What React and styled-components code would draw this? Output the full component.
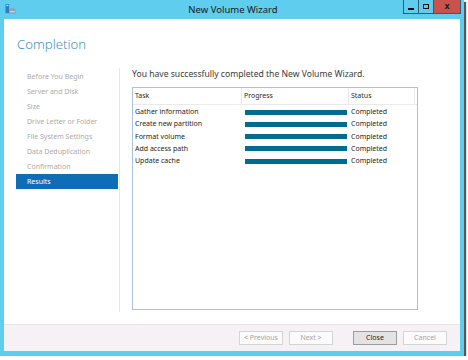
import styled, { createGlobalStyle } from 'styled-components'

const Global = createGlobalStyle`
  html, body {
    margin: 0;
    padding: 0;
    background: #ffffff;
  }
  body {
    font-family: 'Noto Sans', 'Open Sans', sans-serif;
  }
`

const steps = [
  'Before You Begin',
  'Server and Disk',
  'Size',
  'Drive Letter or Folder',
  'File System Settings',
  'Data Deduplication',
  'Confirmation',
  'Results'
]

const tasks = [
  'Gather information',
  'Create new partition',
  'Format volume',
  'Add access path',
  'Update cache'
]

export default function App() {
  return (
    <>
      <Global />
      <Janela>
        <BarraTitulo>
          <IconeApp viewBox="0 0 12 12">
            <rect x="0.5" y="0" width="4" height="10" fill="#2f7fc4" />
            <rect x="1.3" y="1" width="2.4" height="1.2" fill="#bfe3f7" />
            <path d="M4.5 6.5 L6 4.5 H10 L11.5 6.5 V10.5 H4.5 Z" fill="#8ea3b4" />
            <rect x="5.5" y="8" width="5" height="1" fill="#e8eef2" />
          </IconeApp>
          <Titulo>New Volume Wizard</Titulo>
          <BotoesJanela>
            <BotaoJanela>
              <Traco />
            </BotaoJanela>
            <BotaoJanela>
              <Quadrado />
            </BotaoJanela>
            <BotaoJanela $fechar>x</BotaoJanela>
          </BotoesJanela>
        </BarraTitulo>
        <Cliente>
          <Conteudo>
            <Cabecalho>Completion</Cabecalho>
            <Corpo>
              <Navegacao>
                {steps.map(step => (
                  <Passo key={step} $ativo={step === 'Results'}>
                    {step}
                  </Passo>
                ))}
              </Navegacao>
              <Principal>
                <Mensagem>
                  You have successfully completed the New Volume Wizard.
                </Mensagem>
                <Tabela>
                  <LinhaCabecalho>
                    <CelulaCabecalho $largura="109px">Task</CelulaCabecalho>
                    <CelulaCabecalho $largura="107px">Progress</CelulaCabecalho>
                    <CelulaCabecalho $largura="66px">Status</CelulaCabecalho>
                    <Preenchimento />
                  </LinhaCabecalho>
                  <Linhas>
                    {tasks.map(task => (
                      <Linha key={task}>
                        <Celula $largura="109px">{task}</Celula>
                        <CelulaProgresso>
                          <Barra />
                        </CelulaProgresso>
                        <Celula $largura="66px">Completed</Celula>
                      </Linha>
                    ))}
                  </Linhas>
                </Tabela>
              </Principal>
            </Corpo>
          </Conteudo>
          <Rodape>
            <Botao disabled>&lt; Previous</Botao>
            <Botao disabled>Next &gt;</Botao>
            <Botao $principal $espaco>
              Close
            </Botao>
            <Botao disabled>Cancel</Botao>
          </Rodape>
        </Cliente>
      </Janela>
    </>
  )
}

const Janela = styled.div`
  width: 464px;
  height: 356px;
  box-sizing: border-box;
  background: #5fcdee;
  padding: 0 4px 5px 4px;
  display: flex;
  flex-direction: column;
  box-shadow: 2px 2px 1px rgba(30, 30, 30, 0.75);
`

const BarraTitulo = styled.div`
  height: 19px;
  margin: 0 -4px;
  padding: 0 3px 0 5px;
  display: grid;
  grid-template-columns: 1fr auto 1fr;
  align-items: start;
`

const IconeApp = styled.svg`
  width: 11px;
  height: 11px;
  margin-top: 4px;
`

const Titulo = styled.div`
  font-size: 9.5px;
  line-height: 19px;
  color: #1a1a1a;
`

const BotoesJanela = styled.div`
  justify-self: end;
  display: flex;
`

const BotaoJanela = styled.div`
  width: ${props => (props.$fechar ? '28px' : '16px')};
  height: 14px;
  box-sizing: border-box;
  border: 1px solid #2f5d74;
  border-top: none;
  margin-left: -1px;
  background: ${props => (props.$fechar ? '#c9524d' : 'transparent')};
  display: flex;
  align-items: center;
  justify-content: center;
  font-family: 'DejaVu Sans', sans-serif;
  font-weight: 700;
  font-size: 8px;
  color: #1f1f1f;
  line-height: 1;
`

const Traco = styled.span`
  width: 6px;
  height: 2px;
  margin-top: 4px;
  background: #111;
`

const Quadrado = styled.span`
  width: 4px;
  height: 3px;
  border: 1.5px solid #111;
`

const Cliente = styled.div`
  flex: 1;
  background: #ffffff;
  display: flex;
  flex-direction: column;
`

const Conteudo = styled.div`
  flex: 1;
  display: flex;
  flex-direction: column;
`

const Cabecalho = styled.h1`
  margin: 0;
  padding: 16px 0 0 13px;
  height: 35px;
  box-sizing: border-box;
  font-weight: 300;
  font-size: 13.2px;
  line-height: 18px;
  color: #4a90c2;
`

const Corpo = styled.div`
  display: flex;
  padding-left: 12px;
  margin-top: 14px;
`

const Navegacao = styled.div`
  width: 104px;
  height: 244px;
  border-right: 1px solid #e6e6e6;
  padding-top: 1px;
  box-sizing: border-box;
`

const Passo = styled.div`
  width: 102px;
  height: 15px;
  box-sizing: border-box;
  padding-left: 11px;
  font-size: 7px;
  line-height: 15px;
  white-space: nowrap;
  color: ${props => (props.$ativo ? '#ffffff' : '#ababab')};
  background: ${props => (props.$ativo ? '#0f6db6' : 'transparent')};
`

const Principal = styled.div`
  padding-left: 12px;
  display: flex;
  flex-direction: column;
`

const Mensagem = styled.div`
  font-size: 8.6px;
  line-height: 12px;
  color: #3a3a3a;
  white-space: nowrap;
`

const Tabela = styled.div`
  margin-top: 7px;
  width: 286px;
  height: 223px;
  box-sizing: border-box;
  border: 1px solid #a9c1da;
`

const LinhaCabecalho = styled.div`
  display: flex;
  height: 16px;
  border-bottom: 1px solid #eaeaea;
`

const CelulaCabecalho = styled.div`
  width: ${props => props.$largura};
  box-sizing: border-box;
  border-right: 1px solid #e8e8e8;
  padding-left: 2px;
  font-size: 7px;
  line-height: 16px;
  color: #2a2a2a;
`

const Preenchimento = styled.div`
  flex: 1;
`

const Linhas = styled.div`
  padding-top: 1px;
`

const Linha = styled.div`
  display: flex;
  height: 12.25px;
  align-items: center;
`

const Celula = styled.div`
  width: ${props => props.$largura};
  box-sizing: border-box;
  padding-left: 2px;
  font-size: 7px;
  line-height: 12px;
  color: #1e1e1e;
  white-space: nowrap;
`

const CelulaProgresso = styled.div`
  width: 107px;
  box-sizing: border-box;
  padding: 0 2px 0 3px;
  display: flex;
  align-items: center;
`

const Barra = styled.div`
  flex: 1;
  height: 5px;
  background: #006c8f;
`

const Rodape = styled.div`
  height: 27px;
  box-sizing: border-box;
  border-top: 1px solid #e6e4e5;
  background: #f6f1f4;
  display: flex;
  align-items: center;
  justify-content: flex-end;
  gap: 6px;
  padding: 0 13px 0 0;
`

const Botao = styled.button`
  width: 44px;
  height: 14px;
  margin: 0 0 0 ${props => (props.$espaco ? '14px' : '0')};
  padding: 0;
  box-sizing: border-box;
  border: 1px solid ${props => (props.$principal ? '#9c9c9c' : '#d4d4d4')};
  background: ${props => (props.$principal ? '#e3e3e3' : '#fbfbfb')};
  color: ${props => (props.$principal ? '#1e1e1e' : '#a5a5a5')};
  font-family: 'Noto Sans', 'Open Sans', sans-serif;
  font-size: 7px;
  line-height: 12px;
`
